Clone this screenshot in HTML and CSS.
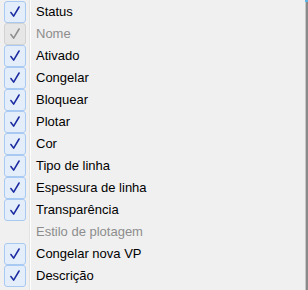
FILE: index.html
```html
<!DOCTYPE html>
<html lang="pt">
<head>
    <meta charset="UTF-8">
    <title>Colunas</title>
    <link rel="stylesheet" href="styles.css">
</head>
<body>
    <div class="screen">
        <ul class="menu">
            <li class="item"><span class="check"><svg viewBox="0 0 22 22"><path d="M6.5 11.5 L9.5 15.5 L15.5 5.5"/></svg></span><span class="label">Status</span></li>
            <li class="item disabled"><span class="check"><svg viewBox="0 0 22 22"><path d="M6.5 11.5 L9.5 15.5 L15.5 5.5"/></svg></span><span class="label">Nome</span></li>
            <li class="item"><span class="check"><svg viewBox="0 0 22 22"><path d="M6.5 11.5 L9.5 15.5 L15.5 5.5"/></svg></span><span class="label">Ativado</span></li>
            <li class="item"><span class="check"><svg viewBox="0 0 22 22"><path d="M6.5 11.5 L9.5 15.5 L15.5 5.5"/></svg></span><span class="label">Congelar</span></li>
            <li class="item"><span class="check"><svg viewBox="0 0 22 22"><path d="M6.5 11.5 L9.5 15.5 L15.5 5.5"/></svg></span><span class="label">Bloquear</span></li>
            <li class="item"><span class="check"><svg viewBox="0 0 22 22"><path d="M6.5 11.5 L9.5 15.5 L15.5 5.5"/></svg></span><span class="label">Plotar</span></li>
            <li class="item"><span class="check"><svg viewBox="0 0 22 22"><path d="M6.5 11.5 L9.5 15.5 L15.5 5.5"/></svg></span><span class="label">Cor</span></li>
            <li class="item"><span class="check"><svg viewBox="0 0 22 22"><path d="M6.5 11.5 L9.5 15.5 L15.5 5.5"/></svg></span><span class="label">Tipo de linha</span></li>
            <li class="item"><span class="check"><svg viewBox="0 0 22 22"><path d="M6.5 11.5 L9.5 15.5 L15.5 5.5"/></svg></span><span class="label">Espessura de linha</span></li>
            <li class="item"><span class="check"><svg viewBox="0 0 22 22"><path d="M6.5 11.5 L9.5 15.5 L15.5 5.5"/></svg></span><span class="label">Transparência</span></li>
            <li class="item disabled"><span class="check empty"></span><span class="label">Estilo de plotagem</span></li>
            <li class="item"><span class="check"><svg viewBox="0 0 22 22"><path d="M6.5 11.5 L9.5 15.5 L15.5 5.5"/></svg></span><span class="label">Congelar nova VP</span></li>
            <li class="item"><span class="check"><svg viewBox="0 0 22 22"><path d="M6.5 11.5 L9.5 15.5 L15.5 5.5"/></svg></span><span class="label">Descrição</span></li>
        </ul>
        <div class="edge"></div>
    </div>
</body>
</html>
```

FILE: styles.css
```css
/* Basic reset */
* {
    margin: 0;
    padding: 0;
    box-sizing: border-box;
}

body {
    font-family: 'Segoe UI', 'Liberation Sans', Arial, sans-serif;
    font-size: 13px;
    background-color: #f0f0f0;
    width: 308px;
    height: 290px;
    overflow: hidden;
}

.screen {
    display: flex;
    height: 290px;
}

/* Context menu with the icon gutter line */
.menu {
    list-style: none;
    flex: 1;
    padding-top: 1px;
    background:
        linear-gradient(to right, transparent 29px, #e2e3e3 29px, #e2e3e3 30px, #ffffff 30px, #ffffff 31px, transparent 31px),
        #f0f0f0;
}

.item {
    display: flex;
    align-items: center;
    height: 22px;
    color: #000000;
}

.check {
    width: 22px;
    height: 22px;
    margin-left: 4px;
    margin-right: 10px;
    border: 1px solid #a8c9f2;
    border-radius: 3px;
    background-color: #e4eefb;
    display: flex;
    align-items: center;
    justify-content: center;
}

.check svg {
    width: 22px;
    height: 22px;
}

.check path {
    fill: none;
    stroke: #1a2aa0;
    stroke-width: 1.7;
    stroke-linecap: round;
    stroke-linejoin: round;
}

.check.empty {
    border-color: transparent;
    background-color: transparent;
}

.disabled {
    color: #8d8d8d;
}

.disabled .check {
    border-color: #d2d2d2;
    background-color: #e6e6e6;
}

.disabled .check path {
    stroke: #8d8d8d;
}

.disabled .check.empty {
    border-color: transparent;
    background-color: transparent;
}

.label {
    padding-bottom: 1px;
}

/* Window border peeking in on the right */
.edge {
    width: 3px;
    background: linear-gradient(to right, #c8c8c8 0, #c8c8c8 1px, #8a8a8a 1px);
    border-top: 2px solid #5fb3e6;
}
```
